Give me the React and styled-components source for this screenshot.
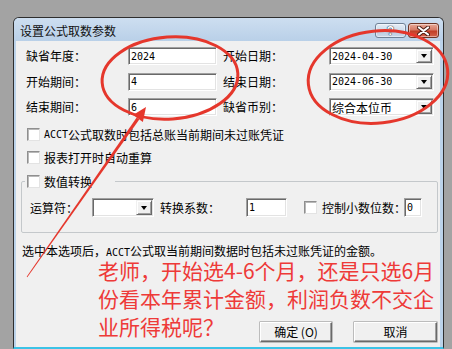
import React from 'react'
import styled, { createGlobalStyle } from 'styled-components'

const GlobalStyle = createGlobalStyle`
  html, body { margin: 0; padding: 0; }
  body {
    background: #a3a3a3;
    font-family: "Noto Sans CJK SC", "Liberation Sans", sans-serif;
    font-size: 12px;
    color: #000;
  }
`

const Page = styled.div`
  position: relative;
  width: 452px;
  height: 349px;
  overflow: hidden;
  box-sizing: border-box;
  padding: 17px 0 0 13px;
`

const Window = styled.div`
  width: 431px;
  height: 332px;
  box-sizing: border-box;
  border: 1px solid #2e2e2e;
  border-bottom: 2px solid #3cc3e6;
  border-radius: 6px 6px 0 0;
  background: #bcd3ea;
  display: flex;
  flex-direction: column;
`

const TitleBar = styled.div`
  height: 23px;
  flex: none;
  display: flex;
  align-items: flex-start;
  padding: 0 4px 0 6px;
  border-radius: 5px 5px 0 0;
  background: linear-gradient(#cddef0, #b9d0e8);
`

const Title = styled.div`
  flex: 1;
  line-height: 26px;
  font-size: 12px;
  color: #111;
`

const CaptionButton = styled.div`
  width: 31px;
  height: 15px;
  margin-top: 5px;
  margin-left: ${p => p.$gap || 0}px;
  box-sizing: border-box;
  border-radius: 3px;
  display: flex;
  align-items: center;
  justify-content: center;
  border: 1px solid ${p => (p.$close ? '#6e3424' : '#6f8196')};
  background: ${p =>
    p.$close
      ? 'linear-gradient(#e8aa98, #d57a66 45%, #c23e26 55%, #d2644c)'
      : 'linear-gradient(#e4edf7, #d0deec 45%, #bccde1 55%, #c9d8ea)'};
  box-shadow: inset 0 0 0 1px rgba(255, 255, 255, 0.45);
`

const HelpGlyph = styled.span`
  font-family: "Liberation Sans", sans-serif;
  font-weight: bold;
  font-size: 12px;
  line-height: 12px;
  color: #fff;
  text-shadow: 0 0 1px #34465c, 0 0 1px #34465c, 0 0 1px #34465c;
`

const Content = styled.div`
  flex: 1;
  margin: 0 3px 0 2px;
  background: #f0f0f0;
  display: flex;
  flex-direction: column;
`

const FieldGrid = styled.div`
  display: grid;
  grid-template-columns: 102px 95px 106px 105px;
  grid-auto-rows: 18px;
  row-gap: 7.5px;
  margin: 6px 0 0 10px;
  align-items: center;
`

const Label = styled.span`
  white-space: nowrap;
  line-height: 16px;
  width: ${p => (p.$w ? `${p.$w}px` : 'auto')};
  margin-left: ${p => p.$ml || 0}px;
  flex: none;
`

const Mono = styled.span`
  font-family: "DejaVu Sans Mono", monospace;
  font-size: 10px;
`

const Field = styled.div`
  box-sizing: border-box;
  width: ${p => p.$w}px;
  height: ${p => p.$h || 18}px;
  margin-left: ${p => p.$ml || 0}px;
  flex: none;
  background: #fff;
  border: 1px solid;
  border-color: #a0a0a0 #fff #fff #a0a0a0;
  box-shadow: inset 1px 1px 0 #696969, inset -1px -1px 0 #e3e3e3;
  padding-left: 2px;
  display: flex;
  align-items: center;
  font-family: ${p => (p.$cjk ? '"Noto Sans CJK SC", sans-serif' : '"DejaVu Sans Mono", monospace')};
  font-size: ${p => (p.$cjk ? 12 : 10)}px;
  white-space: nowrap;
`

const FieldText = styled.span`
  flex: 1;
`

const DropButton = styled.div`
  width: 16px;
  align-self: stretch;
  margin: 1px 1px 1px 0;
  box-sizing: border-box;
  background: #f0f0f0;
  border: 1px solid;
  border-color: #f0f0f0 #696969 #696969 #f0f0f0;
  box-shadow: inset 1px 1px 0 #fff, inset -1px -1px 0 #a0a0a0;
  display: flex;
  align-items: center;
  justify-content: center;

  &::after {
    content: '';
    border-left: 3.5px solid transparent;
    border-right: 3.5px solid transparent;
    border-top: 4px solid #000;
  }
`

const CheckRow = styled.label`
  display: flex;
  align-items: center;
  height: 16px;
  margin: ${p => p.$mt || 0}px 0 0 11px;
  white-space: nowrap;
`

const Box = styled.span`
  width: 13px;
  height: 13px;
  box-sizing: border-box;
  flex: none;
  margin-left: ${p => p.$ml || 0}px;
  margin-right: 4px;
  background: #fff;
  border: 1px solid;
  border-color: #8f8f8f #e3e3e3 #e3e3e3 #8f8f8f;
  box-shadow: inset 1px 1px 0 #b8b8b8;
`

const Group = styled.fieldset`
  margin: 8px 2px 0 5px;
  padding: 9px 0 15px 8px;
  border: 1px solid #c4c8cb;
  border-radius: 2px;
  min-width: 0;
`

const GroupLegend = styled.legend`
  display: flex;
  align-items: center;
  width: 90px;
  height: 16px;
  box-sizing: border-box;
  margin-left: -5px;
  padding: 0 0 0 2px;
  white-space: nowrap;
`

const GroupRow = styled.div`
  display: flex;
  align-items: center;
  height: 19px;
`

const Hint = styled.div`
  margin: 12px 0 0 6px;
  line-height: 12px;
  white-space: nowrap;
`

const ButtonRow = styled.div`
  margin-top: auto;
  margin-bottom: 5px;
  padding-right: 3px;
  display: flex;
  justify-content: flex-end;
  gap: 22px;
`

const DialogButton = styled.div`
  width: ${p => p.$w}px;
  height: 20px;
  box-sizing: border-box;
  background: #f0f0f0;
  border: 1px solid;
  border-color: #fff #696969 #696969 #fff;
  box-shadow: inset -1px -1px 0 #a0a0a0, 0 0 0 0.5px #888;
  display: flex;
  align-items: center;
  justify-content: center;
  line-height: 16px;
  white-space: nowrap;
`

const Overlay = styled.svg`
  position: absolute;
  left: 0;
  top: 0;
  pointer-events: none;
`

const Note = styled.div`
  position: absolute;
  left: 98px;
  top: 256px;
  font-family: "Noto Sans CJK SC", sans-serif;
  font-size: 21px;
  line-height: 28px;
  color: #ee3a38;
  white-space: nowrap;
  pointer-events: none;
`

const Combo = ({ w, h, ml, cjk, children }) => (
  <Field $w={w} $h={h} $ml={ml} $cjk={cjk}>
    <FieldText>{children}</FieldText>
    <DropButton />
  </Field>
)

const App = () => {
  const red = '#e5372c'
  return (
    <Page>
      <GlobalStyle />
      <Window>
        <TitleBar>
          <Title>设置公式取数参数</Title>
          <CaptionButton>
            <HelpGlyph>?</HelpGlyph>
          </CaptionButton>
          <CaptionButton $close $gap={2}>
            <svg width="13" height="10" viewBox="0 0 13 10">
              <path d="M2 1.5 L11 8.5 M11 1.5 L2 8.5" stroke="#4a1c12" strokeWidth="4" strokeLinecap="round" />
              <path d="M2 1.5 L11 8.5 M11 1.5 L2 8.5" stroke="#fff" strokeWidth="2.2" strokeLinecap="round" />
            </svg>
          </CaptionButton>
        </TitleBar>

        <Content>
          <FieldGrid>
            <Label>缺省年度：</Label>
            <Field $w={89}>2024</Field>
            <Label>开始日期：</Label>
            <Combo w={105}>2024-04-30</Combo>

            <Label>开始期间：</Label>
            <Field $w={89}>4</Field>
            <Label>结束日期：</Label>
            <Combo w={105}>2024-06-30</Combo>

            <Label>结束期间：</Label>
            <Field $w={89}>6</Field>
            <Label>缺省币别：</Label>
            <Combo w={105} cjk>综合本位币</Combo>
          </FieldGrid>

          <CheckRow $mt={10}>
            <Box />
            <Mono>ACCT</Mono>公式取数时包括总账当前期间未过账凭证
          </CheckRow>
          <CheckRow $mt={7}>
            <Box />
            报表打开时自动重算
          </CheckRow>

          <Group>
            <GroupLegend>
              <Box />
              数值转换
            </GroupLegend>
            <GroupRow>
              <Label $w={62}>运算符：</Label>
              <Combo w={62} h={19} />
              <Label $w={86} $ml={6}>转换系数：</Label>
              <Field $w={41} $h={19}>1</Field>
              <Box $ml={17} />
              <Label $w={82} $ml={1}>控制小数位数：</Label>
              <Field $w={18} $h={19}>0</Field>
            </GroupRow>
          </Group>

          <Hint>
            选中本选项后，<Mono>ACCT</Mono>公式取当前期间数据时包括未过账凭证的金额。
          </Hint>

          <ButtonRow>
            <DialogButton $w={72}>确定 (O)</DialogButton>
            <DialogButton $w={83}>取消</DialogButton>
          </ButtonRow>
        </Content>
      </Window>

      <Overlay width="452" height="349" viewBox="0 0 452 349">
        <ellipse cx="170" cy="78" rx="68" ry="41" transform="rotate(-4 170 78)" fill="none" stroke={red} strokeWidth="3" />
        <ellipse cx="378" cy="77" rx="70" ry="46" transform="rotate(-6 378 77)" fill="none" stroke={red} strokeWidth="3" />
        <polygon points="26.67,276.77 27.33,277.23 139.28,119.39 136.66,117.55" fill={red} />
        <polygon points="142.89,121.91 133.05,115.03 146,107" fill={red} />
      </Overlay>

      <Note>
        <div>老师，开始选4-6个月，还是只选6月</div>
        <div>份看本年累计金额，利润负数不交企</div>
        <div>业所得税呢？</div>
      </Note>
    </Page>
  )
}

export default App
